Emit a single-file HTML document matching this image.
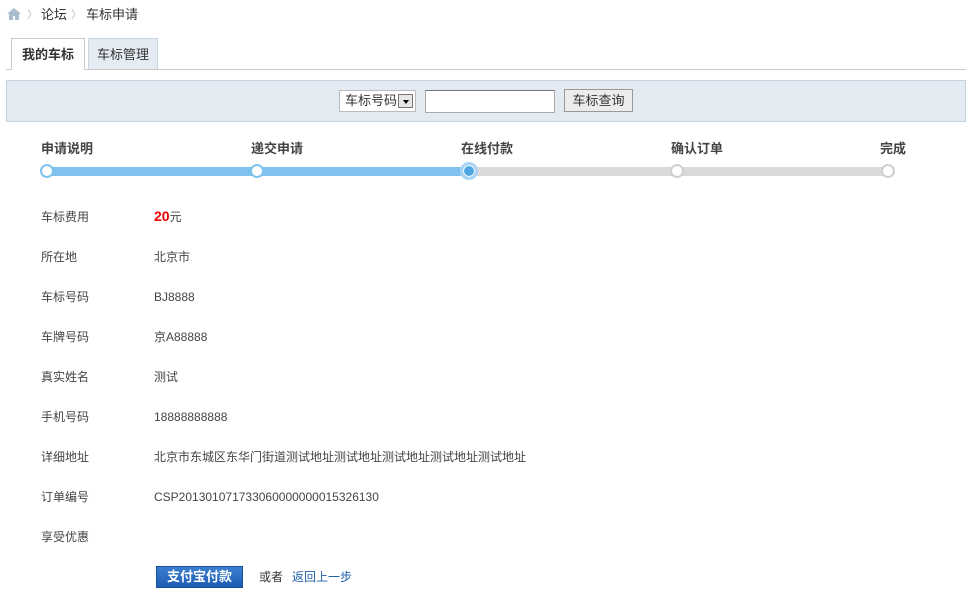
<!DOCTYPE html>
<html><head><meta charset="utf-8"><style>
*{margin:0;padding:0;box-sizing:border-box}
body{width:969px;height:606px;background:#fff;font-family:"Liberation Sans","Noto Sans CJK SC","WenQuanYi Zen Hei",sans-serif;font-size:12px;line-height:16px;color:#333;position:relative;overflow:hidden}
.a{position:absolute;white-space:nowrap}
.lbl{font-weight:bold;font-size:13px;color:#444}
.dot{position:absolute;width:14px;height:14px;border-radius:50%;background:#fff;top:164px}
.lab{left:41px;color:#444}
.val{left:154px;color:#444}
</style></head><body>
<svg class="a" style="left:7px;top:8px" width="14" height="12" viewBox="0 0 14 12"><path d="M7 0L0 6h2v6h4V8h2v4h4V6h2z" fill="#a9bccd"/></svg>
<div class="a" style="left:27px;top:7px;color:#bbb;font-size:11px">〉</div>
<div class="a" style="left:41px;top:7px;font-size:13px">论坛</div>
<div class="a" style="left:71px;top:7px;color:#bbb;font-size:11px">〉</div>
<div class="a" style="left:86px;top:7px;font-size:13px">车标申请</div>

<div class="a" style="left:6px;top:69px;width:960px;height:1px;background:#c9c9c9"></div>
<div class="a" style="left:11px;top:38px;width:74px;height:32px;border:1px solid #c9c9c9;border-bottom:none;background:#fff;text-align:center;line-height:32px;font-weight:bold;font-size:13px">我的车标</div>
<div class="a" style="left:88px;top:38px;width:70px;height:31px;border:1px solid #c9d4df;border-bottom:none;background:#e4ebf3;text-align:center;line-height:32px;font-size:13px">车标管理</div>

<div class="a" style="left:6px;top:80px;width:960px;height:42px;background:#e3eaf2;border:1px solid #c5d1dc"></div>
<div class="a" style="left:339px;top:90px;width:77px;height:22px;background:#fff;border:1px solid #bbb;padding-left:5px;line-height:20px;font-size:13px">车标号码</div>
<div class="a" style="left:398px;top:94px;width:15px;height:14px;border:1px solid #777;background:#e6e6e6"><div style="margin:5px auto 0;width:0;height:0;border-left:3px solid transparent;border-right:3px solid transparent;border-top:4px solid #000"></div></div>
<div class="a" style="left:425px;top:90px;width:130px;height:23px;background:#fff;border:1px solid #aaa;border-top-color:#777"></div>
<div class="a" style="left:564px;top:89px;width:69px;height:23px;background:#ececec;border:1px solid #999;text-align:center;line-height:21px;font-size:13px;color:#333">车标查询</div>

<div class="a lbl" style="left:41px;top:141px">申请说明</div>
<div class="a lbl" style="left:251px;top:141px">递交申请</div>
<div class="a lbl" style="left:461px;top:141px">在线付款</div>
<div class="a lbl" style="left:671px;top:141px">确认订单</div>
<div class="a lbl" style="left:880px;top:141px">完成</div>
<div class="a" style="left:47px;top:167px;width:422px;height:9px;background:#7fc2ed"></div>
<div class="a" style="left:469px;top:167px;width:419px;height:9px;background:#dadada"></div>
<div class="dot" style="left:40px;border:2px solid #7fc2ed"></div>
<div class="dot" style="left:250px;border:2px solid #7fc2ed"></div>
<div class="a" style="left:460px;top:162px;width:18px;height:18px;border-radius:50%;background:#4ea6e3;border:3px solid #a9d4f3;box-shadow:0 0 0 1px #fff inset"></div>
<div class="dot" style="left:670px;border:2px solid #cfcfcf"></div>
<div class="dot" style="left:881px;border:2px solid #cfcfcf"></div>

<div class="a lab" style="top:209px">车标费用</div><div class="a val" style="top:208px"><b style="color:#e00;font-size:14px">20</b>元</div>
<div class="a lab" style="top:249px">所在地</div><div class="a val" style="top:249px">北京市</div>
<div class="a lab" style="top:289px">车标号码</div><div class="a val" style="top:289px">BJ8888</div>
<div class="a lab" style="top:329px">车牌号码</div><div class="a val" style="top:329px">京A88888</div>
<div class="a lab" style="top:369px">真实姓名</div><div class="a val" style="top:369px">测试</div>
<div class="a lab" style="top:409px">手机号码</div><div class="a val" style="top:409px">18888888888</div>
<div class="a lab" style="top:449px">详细地址</div><div class="a val" style="top:449px">北京市东城区东华门街道测试地址测试地址测试地址测试地址测试地址</div>
<div class="a lab" style="top:489px">订单编号</div><div class="a val" style="top:489px">CSP201301071733060000000015326130</div>
<div class="a lab" style="top:529px">享受优惠</div>

<div class="a" style="left:156px;top:566px;width:87px;height:22px;background:linear-gradient(#3b7fd0,#1c5cb3);border:1px solid #1a4f99;color:#fff;font-weight:bold;font-size:13px;text-align:center;line-height:20px">支付宝付款</div>
<div class="a" style="left:259px;top:569px">或者</div>
<div class="a" style="left:292px;top:569px;color:#1f5fa8">返回上一步</div>
</body></html>
